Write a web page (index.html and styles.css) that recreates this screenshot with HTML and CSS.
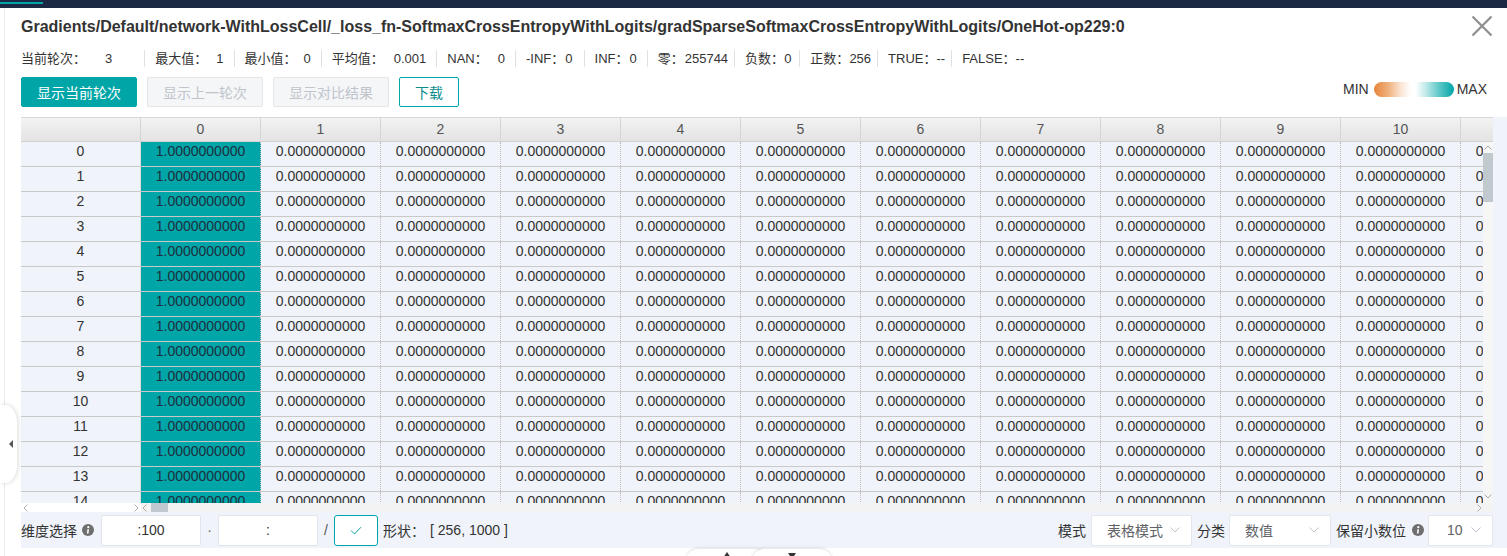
FILE: index.html
```html
<!DOCTYPE html>
<html lang="zh-CN">
<head>
<meta charset="utf-8">
<title>Tensor</title>
<link rel="stylesheet" href="styles.css">
</head>
<body>
<div class="topbar"><span class="topbar-tab"></span></div>
<div class="layout">
  <div class="side"></div>
  <div class="main">
    <div class="title-row">
      <h1 class="title">Gradients/Default/network-WithLossCell/_loss_fn-SoftmaxCrossEntropyWithLogits/gradSparseSoftmaxCrossEntropyWithLogits/OneHot-op229:0</h1>
      <button class="close" aria-label="关闭"><svg width="22" height="22" viewBox="0 0 22 22"><path d="M1.5 1.5 L20.5 20.5 M20.5 1.5 L1.5 20.5" stroke="#8e8e8e" stroke-width="2.2" fill="none"/></svg></button>
    </div>
    <div class="stats">
      <div class="stat stat-first"><span class="stat-label">当前轮次：</span><span class="stat-value">3</span></div>
      <div class="stat"><span class="stat-label">最大值：</span><span class="stat-value gap-9">1</span></div>
      <div class="stat"><span class="stat-label">最小值：</span><span class="stat-value gap-7">0</span></div>
      <div class="stat"><span class="stat-label">平均值：</span><span class="stat-value gap-10">0.001</span></div>
      <div class="stat"><span class="stat-label">NAN：</span><span class="stat-value gap-10">0</span></div>
      <div class="stat stat-wide"><span class="stat-label">-INF：</span><span class="stat-value gap-1">0</span></div>
      <div class="stat"><span class="stat-label">INF：</span><span class="stat-value gap-1">0</span></div>
      <div class="stat stat-narrow"><span class="stat-label">零：</span><span class="stat-value gap-1">255744</span></div>
      <div class="stat stat-tight"><span class="stat-label">负数：</span><span class="stat-value gap-0">0</span></div>
      <div class="stat stat-narrow"><span class="stat-label">正数：</span><span class="stat-value gap-0">256</span></div>
      <div class="stat stat-narrow"><span class="stat-label">TRUE：</span><span class="stat-value gap-0">--</span></div>
      <div class="stat stat-last"><span class="stat-label">FALSE：</span><span class="stat-value gap-0">--</span></div>
    </div>
    <div class="actions">
      <button class="btn btn-primary">显示当前轮次</button>
      <button class="btn btn-disabled">显示上一轮次</button>
      <button class="btn btn-disabled">显示对比结果</button>
      <button class="btn btn-outline">下载</button>
      <div class="legend"><span class="legend-min">MIN</span><span class="legend-bar"></span><span class="legend-max">MAX</span></div>
    </div>
    <div class="grid-area">
      <div class="grid">
        <div class="ghead">
          <div class="hcell"></div>
          <div class="hcell">0</div><div class="hcell">1</div><div class="hcell">2</div><div class="hcell">3</div><div class="hcell">4</div><div class="hcell">5</div><div class="hcell">6</div><div class="hcell">7</div><div class="hcell">8</div><div class="hcell">9</div><div class="hcell">10</div><div class="hcell">11</div>
        </div>
        <div class="gbody">
          <div class="rows">
            <div class="row"><div class="cell idx">0</div><div class="cell hot">1.0000000000</div><div class="cell">0.0000000000</div><div class="cell">0.0000000000</div><div class="cell">0.0000000000</div><div class="cell">0.0000000000</div><div class="cell">0.0000000000</div><div class="cell">0.0000000000</div><div class="cell">0.0000000000</div><div class="cell">0.0000000000</div><div class="cell">0.0000000000</div><div class="cell">0.0000000000</div><div class="cell">0.0000000000</div></div>
            <div class="row"><div class="cell idx">1</div><div class="cell hot">1.0000000000</div><div class="cell">0.0000000000</div><div class="cell">0.0000000000</div><div class="cell">0.0000000000</div><div class="cell">0.0000000000</div><div class="cell">0.0000000000</div><div class="cell">0.0000000000</div><div class="cell">0.0000000000</div><div class="cell">0.0000000000</div><div class="cell">0.0000000000</div><div class="cell">0.0000000000</div><div class="cell">0.0000000000</div></div>
            <div class="row"><div class="cell idx">2</div><div class="cell hot">1.0000000000</div><div class="cell">0.0000000000</div><div class="cell">0.0000000000</div><div class="cell">0.0000000000</div><div class="cell">0.0000000000</div><div class="cell">0.0000000000</div><div class="cell">0.0000000000</div><div class="cell">0.0000000000</div><div class="cell">0.0000000000</div><div class="cell">0.0000000000</div><div class="cell">0.0000000000</div><div class="cell">0.0000000000</div></div>
            <div class="row"><div class="cell idx">3</div><div class="cell hot">1.0000000000</div><div class="cell">0.0000000000</div><div class="cell">0.0000000000</div><div class="cell">0.0000000000</div><div class="cell">0.0000000000</div><div class="cell">0.0000000000</div><div class="cell">0.0000000000</div><div class="cell">0.0000000000</div><div class="cell">0.0000000000</div><div class="cell">0.0000000000</div><div class="cell">0.0000000000</div><div class="cell">0.0000000000</div></div>
            <div class="row"><div class="cell idx">4</div><div class="cell hot">1.0000000000</div><div class="cell">0.0000000000</div><div class="cell">0.0000000000</div><div class="cell">0.0000000000</div><div class="cell">0.0000000000</div><div class="cell">0.0000000000</div><div class="cell">0.0000000000</div><div class="cell">0.0000000000</div><div class="cell">0.0000000000</div><div class="cell">0.0000000000</div><div class="cell">0.0000000000</div><div class="cell">0.0000000000</div></div>
            <div class="row"><div class="cell idx">5</div><div class="cell hot">1.0000000000</div><div class="cell">0.0000000000</div><div class="cell">0.0000000000</div><div class="cell">0.0000000000</div><div class="cell">0.0000000000</div><div class="cell">0.0000000000</div><div class="cell">0.0000000000</div><div class="cell">0.0000000000</div><div class="cell">0.0000000000</div><div class="cell">0.0000000000</div><div class="cell">0.0000000000</div><div class="cell">0.0000000000</div></div>
            <div class="row"><div class="cell idx">6</div><div class="cell hot">1.0000000000</div><div class="cell">0.0000000000</div><div class="cell">0.0000000000</div><div class="cell">0.0000000000</div><div class="cell">0.0000000000</div><div class="cell">0.0000000000</div><div class="cell">0.0000000000</div><div class="cell">0.0000000000</div><div class="cell">0.0000000000</div><div class="cell">0.0000000000</div><div class="cell">0.0000000000</div><div class="cell">0.0000000000</div></div>
            <div class="row"><div class="cell idx">7</div><div class="cell hot">1.0000000000</div><div class="cell">0.0000000000</div><div class="cell">0.0000000000</div><div class="cell">0.0000000000</div><div class="cell">0.0000000000</div><div class="cell">0.0000000000</div><div class="cell">0.0000000000</div><div class="cell">0.0000000000</div><div class="cell">0.0000000000</div><div class="cell">0.0000000000</div><div class="cell">0.0000000000</div><div class="cell">0.0000000000</div></div>
            <div class="row"><div class="cell idx">8</div><div class="cell hot">1.0000000000</div><div class="cell">0.0000000000</div><div class="cell">0.0000000000</div><div class="cell">0.0000000000</div><div class="cell">0.0000000000</div><div class="cell">0.0000000000</div><div class="cell">0.0000000000</div><div class="cell">0.0000000000</div><div class="cell">0.0000000000</div><div class="cell">0.0000000000</div><div class="cell">0.0000000000</div><div class="cell">0.0000000000</div></div>
            <div class="row"><div class="cell idx">9</div><div class="cell hot">1.0000000000</div><div class="cell">0.0000000000</div><div class="cell">0.0000000000</div><div class="cell">0.0000000000</div><div class="cell">0.0000000000</div><div class="cell">0.0000000000</div><div class="cell">0.0000000000</div><div class="cell">0.0000000000</div><div class="cell">0.0000000000</div><div class="cell">0.0000000000</div><div class="cell">0.0000000000</div><div class="cell">0.0000000000</div></div>
            <div class="row"><div class="cell idx">10</div><div class="cell hot">1.0000000000</div><div class="cell">0.0000000000</div><div class="cell">0.0000000000</div><div class="cell">0.0000000000</div><div class="cell">0.0000000000</div><div class="cell">0.0000000000</div><div class="cell">0.0000000000</div><div class="cell">0.0000000000</div><div class="cell">0.0000000000</div><div class="cell">0.0000000000</div><div class="cell">0.0000000000</div><div class="cell">0.0000000000</div></div>
            <div class="row"><div class="cell idx">11</div><div class="cell hot">1.0000000000</div><div class="cell">0.0000000000</div><div class="cell">0.0000000000</div><div class="cell">0.0000000000</div><div class="cell">0.0000000000</div><div class="cell">0.0000000000</div><div class="cell">0.0000000000</div><div class="cell">0.0000000000</div><div class="cell">0.0000000000</div><div class="cell">0.0000000000</div><div class="cell">0.0000000000</div><div class="cell">0.0000000000</div></div>
            <div class="row"><div class="cell idx">12</div><div class="cell hot">1.0000000000</div><div class="cell">0.0000000000</div><div class="cell">0.0000000000</div><div class="cell">0.0000000000</div><div class="cell">0.0000000000</div><div class="cell">0.0000000000</div><div class="cell">0.0000000000</div><div class="cell">0.0000000000</div><div class="cell">0.0000000000</div><div class="cell">0.0000000000</div><div class="cell">0.0000000000</div><div class="cell">0.0000000000</div></div>
            <div class="row"><div class="cell idx">13</div><div class="cell hot">1.0000000000</div><div class="cell">0.0000000000</div><div class="cell">0.0000000000</div><div class="cell">0.0000000000</div><div class="cell">0.0000000000</div><div class="cell">0.0000000000</div><div class="cell">0.0000000000</div><div class="cell">0.0000000000</div><div class="cell">0.0000000000</div><div class="cell">0.0000000000</div><div class="cell">0.0000000000</div><div class="cell">0.0000000000</div></div>
            <div class="row"><div class="cell idx">14</div><div class="cell hot">1.0000000000</div><div class="cell">0.0000000000</div><div class="cell">0.0000000000</div><div class="cell">0.0000000000</div><div class="cell">0.0000000000</div><div class="cell">0.0000000000</div><div class="cell">0.0000000000</div><div class="cell">0.0000000000</div><div class="cell">0.0000000000</div><div class="cell">0.0000000000</div><div class="cell">0.0000000000</div><div class="cell">0.0000000000</div></div>
          </div>
          <div class="vscroll">
            <svg class="vs-arrow" width="8" height="5" viewBox="0 0 8 5"><path d="M0.5 4.5 L4 1 L7.5 4.5" stroke="#a8a8a8" fill="none"/></svg>
            <div class="vs-thumb"></div>
            <div class="vs-fill"></div>
            <svg class="vs-arrow vs-down" width="8" height="5" viewBox="0 0 8 5"><path d="M0.5 0.5 L4 4 L7.5 0.5" stroke="#a8a8a8" fill="none"/></svg>
          </div>
        </div>
        <div class="hscroll">
          <div class="hs-frozen">
            <svg width="5" height="8" viewBox="0 0 5 8"><path d="M4.5 0.5 L1 4 L4.5 7.5" stroke="#b0b0b0" fill="none"/></svg>
            <svg width="5" height="8" viewBox="0 0 5 8"><path d="M0.5 0.5 L4 4 L0.5 7.5" stroke="#b0b0b0" fill="none"/></svg>
          </div>
          <div class="hs-main">
            <svg width="5" height="8" viewBox="0 0 5 8"><path d="M4.5 0.5 L1 4 L4.5 7.5" stroke="#b0b0b0" fill="none"/></svg>
            <div class="hs-thumb"></div>
            <div class="hs-fill"></div>
            <svg width="5" height="8" viewBox="0 0 5 8"><path d="M0.5 0.5 L4 4 L0.5 7.5" stroke="#b0b0b0" fill="none"/></svg>
          </div>
          <div class="hs-corner"></div>
        </div>
      </div>
      <div class="toolbar">
        <div class="dims">
          <span class="tb-label">维度选择</span>
          <span class="info"><svg width="12" height="12" viewBox="0 0 12 12"><circle cx="6" cy="6" r="6" fill="#6e6e6e"/><circle cx="6.3" cy="3.2" r="1.1" fill="#fff"/><path d="M5.4 5.2 H7 L6.5 9.6 H4.9 Z" fill="#fff"/></svg></span>
          <span class="tb-input">:100</span>
          <span class="dim-sep">·</span>
          <span class="tb-input">:</span>
          <span class="dim-slash">/</span>
          <button class="check" aria-label="确定"><svg width="12" height="9" viewBox="0 0 12 9"><path d="M1 4.5 L4.5 8 L11 1.2" stroke="#00a5a7" stroke-width="1" fill="none"/></svg></button>
          <span class="shape-label">形状：</span><span class="shape-val">[ 256, 1000 ]</span>
        </div>
        <div class="opts">
          <span class="tb-label opt-label">模式</span>
          <div class="select sel-mode"><span>表格模式</span><svg width="10" height="6" viewBox="0 0 10 6"><path d="M0.5 0.5 L5 5 L9.5 0.5" stroke="#c0c4cc" fill="none"/></svg></div>
          <span class="tb-label opt-label opt-label-tight">分类</span>
          <div class="select sel-cat"><span>数值</span><svg width="10" height="6" viewBox="0 0 10 6"><path d="M0.5 0.5 L5 5 L9.5 0.5" stroke="#c0c4cc" fill="none"/></svg></div>
          <span class="tb-label">保留小数位</span>
          <span class="info info-right"><svg width="12" height="12" viewBox="0 0 12 12"><circle cx="6" cy="6" r="6" fill="#6e6e6e"/><circle cx="6.3" cy="3.2" r="1.1" fill="#fff"/><path d="M5.4 5.2 H7 L6.5 9.6 H4.9 Z" fill="#fff"/></svg></span>
          <div class="select sel-dec"><span>10</span><svg width="10" height="6" viewBox="0 0 10 6"><path d="M0.5 0.5 L5 5 L9.5 0.5" stroke="#c0c4cc" fill="none"/></svg></div>
        </div>
      </div>
    </div>
  </div>
</div>
<div class="handle"><span class="handle-arrow"></span></div>
<div class="tab tab-a"><span class="tri-up"></span></div>
<div class="tab tab-b"><span class="tri-down"></span></div>
</body>
</html>
```

FILE: styles.css
```css
* { box-sizing: border-box; }
html, body { margin: 0; padding: 0; }
body {
  width: 1507px;
  height: 556px;
  overflow: hidden;
  position: relative;
  background: #fff;
  color: #333;
  font-family: "Liberation Sans", "Noto Sans CJK SC", Arial, sans-serif;
}
button { font-family: inherit; cursor: pointer; }

.topbar { height: 8px; background: #1c2944; padding-top: 2px; }
.topbar-tab { display: block; width: 43px; height: 2px; background: #00a5a7; }

.layout { display: flex; height: 548px; }
.side { width: 5px; flex: none; border-right: 1px solid #eaecf0; }
.main { flex: 1; min-width: 0; padding-left: 16px; display: flex; flex-direction: column; }

.title-row { height: 40px; display: flex; align-items: flex-start; padding-right: 14px; }
.title {
  flex: 1; margin: 9px 0 0; font-size: 16px; font-weight: bold; line-height: 20px;
  color: #333; white-space: nowrap; overflow: hidden;
}
.close { margin-top: 7px; width: 22px; height: 22px; padding: 0; border: 0; background: none; display: flex; }

.stats { height: 20px; display: flex; align-items: center; font-size: 13px; }
.stat { height: 17px; line-height: 17px; padding: 0 10px; border-right: 1px solid #e1e1e1; white-space: nowrap; }
.stat-value { margin-left: 8px; }
.stat-first { padding-left: 0; padding-right: 32px; }
.stat-first .stat-value { margin-left: 19px; }
.stat-wide { padding-right: 11px; }
.stat-narrow { padding-right: 6px; }
.stat-tight { padding-right: 8px; }
.stat-last { border-right: 0; }
.stat-value.gap-0 { margin-left: 0; }
.stat-value.gap-1 { margin-left: 1px; }
.stat-value.gap-7 { margin-left: 7px; }
.stat-value.gap-9 { margin-left: 9px; }
.stat-value.gap-10 { margin-left: 10px; }

.actions { margin-top: 9px; height: 30px; display: flex; gap: 10px; padding-right: 20px; }
.btn { height: 30px; width: 116px; padding: 0; font-size: 14px; border-radius: 2px; border: 1px solid transparent; }
.btn-primary { background: #00a5a7; border-color: #00a5a7; color: #fff; }
.btn-disabled { background: #f5f6f7; border-color: #e4e6e9; color: #c0c4cc; cursor: default; }
.btn-outline { width: 60px; background: #fff; border-color: #00a5a7; color: #0b8d90; }
.legend { margin-left: auto; margin-top: 5px; height: 15px; display: flex; align-items: center; font-size: 14px; line-height: 15px; color: #333; }
.legend-bar {
  width: 80px; height: 15px; margin: 0 3px 0 5px; border-radius: 8px;
  background: linear-gradient(to right, #e6843a 0%, #f0b27f 18%, #fbe6d6 34%, #ffffff 46%, #ffffff 52%, #c4ebeb 64%, #5cc6c7 82%, #00a5a7 100%);
}

.grid-area { margin-top: 10px; background: #f0f3fa; }
.grid { width: 1472px; }
.ghead {
  display: flex; height: 25px; overflow: hidden;
  border-top: 1px solid #d8d8d8; border-bottom: 1px solid #d2d2d2;
  background: linear-gradient(#f3f3f3, #e9e9e9 60%, #e4e4e4);
}
.hcell {
  flex: none; width: 120px; border-right: 1px solid #d4d4d4;
  text-align: center; font-size: 14px; line-height: 23px; color: #555;
}
.gbody { display: flex; height: 361px; }
.rows { width: 1462px; overflow: hidden; }
.row { display: flex; height: 25px; border-bottom: 1px solid #c9c9c9; }
.cell {
  flex: none; width: 120px; border-right: 1px dotted #bcbcbc;
  text-align: center; font-size: 14px; line-height: 18px; color: #333; white-space: nowrap;
}
.cell.idx { border-right: 1px solid #dcdcdc; }
.cell.hot { background: #00a5a7; color: #1d2f3e; }

.vscroll { width: 10px; flex: none; background: #f6f6f6; display: flex; flex-direction: column; align-items: center; }
.vs-arrow { margin-top: 3px; flex: none; }
.vs-thumb { width: 10px; height: 49px; margin-top: 3px; background: #c1c9cf; flex: none; }
.vs-fill { flex: 1; }
.vs-down { margin-top: 0; margin-bottom: 4px; }

.hscroll { height: 9px; display: flex; }
.hs-frozen { width: 120px; flex: none; background: #fff; display: flex; align-items: center; justify-content: space-between; padding: 0 2px; }
.hs-main { width: 1342px; flex: none; background: #f3f3f3; display: flex; align-items: center; padding: 0 1px 0 1px; }
.hs-thumb { width: 17px; height: 9px; margin-left: 4px; background: #c1c9cf; }
.hs-fill { flex: 1; }
.hs-corner { width: 10px; flex: none; background: #f3f3f3; }

.toolbar { height: 36px; display: flex; align-items: center; justify-content: space-between; padding-right: 14px; font-size: 14px; }
.dims, .opts { display: flex; align-items: center; }
.tb-label { color: #333; white-space: nowrap; }
.info { display: flex; margin-left: 5px; margin-right: 7px; }
.tb-input {
  width: 100px; height: 31px; background: #fff; border: 1px solid #e1e4ea; border-radius: 2px;
  text-align: center; line-height: 29px; color: #333;
}
.dim-sep { width: 17px; text-align: center; color: #666; font-size: 14px; }
.dim-slash { width: 16px; text-align: center; color: #555; }
.check {
  width: 44px; height: 31px; padding: 0; background: #fff; border: 1px solid #00a5a7; border-radius: 3px;
  display: flex; align-items: center; justify-content: center;
}
.shape-label { margin-left: 5px; color: #333; }
.shape-val { margin-left: 5px; color: #333; }

.opt-label { margin-right: 5px; }
.opt-label-tight { margin-left: 5px; margin-right: 4px; }
.select {
  height: 31px; background: #fff; border: 1px solid #e3e6ec; border-radius: 2px;
  display: flex; align-items: center; justify-content: space-between; padding: 0 11px 0 15px; color: #606266;
}
.sel-mode { width: 101px; }
.sel-cat { width: 102px; margin-right: 5px; }
.sel-dec { width: 65px; padding-left: 18px; }
.info-right { margin-left: 6px; margin-right: 4px; }

.handle {
  position: absolute; left: 0; top: 405px; width: 17px; height: 78px;
  background: #fff; border-radius: 0 12px 12px 0 / 0 18px 18px 0;
  box-shadow: 1px 0 5px rgba(0, 0, 0, 0.14);
  display: flex; align-items: center; justify-content: flex-end; padding-right: 4px;
}
.handle-arrow { width: 0; height: 0; border-right: 4px solid #555; border-top: 4px solid transparent; border-bottom: 4px solid transparent; }

.tab {
  position: absolute; top: 549px; height: 14px; background: #fff;
  border-radius: 12px 12px 0 0; box-shadow: 0 -1px 3px rgba(0, 0, 0, 0.13);
  display: flex; justify-content: center; padding-top: 3px;
}
.tab-a { left: 686px; width: 82px; }
.tab-b { left: 752px; width: 80px; }
.tri-up { width: 0; height: 0; border-bottom: 6px solid #333; border-left: 4px solid transparent; border-right: 4px solid transparent; }
.tri-down { width: 0; height: 0; margin-top: 1px; border-top: 6px solid #333; border-left: 4px solid transparent; border-right: 4px solid transparent; }
```
